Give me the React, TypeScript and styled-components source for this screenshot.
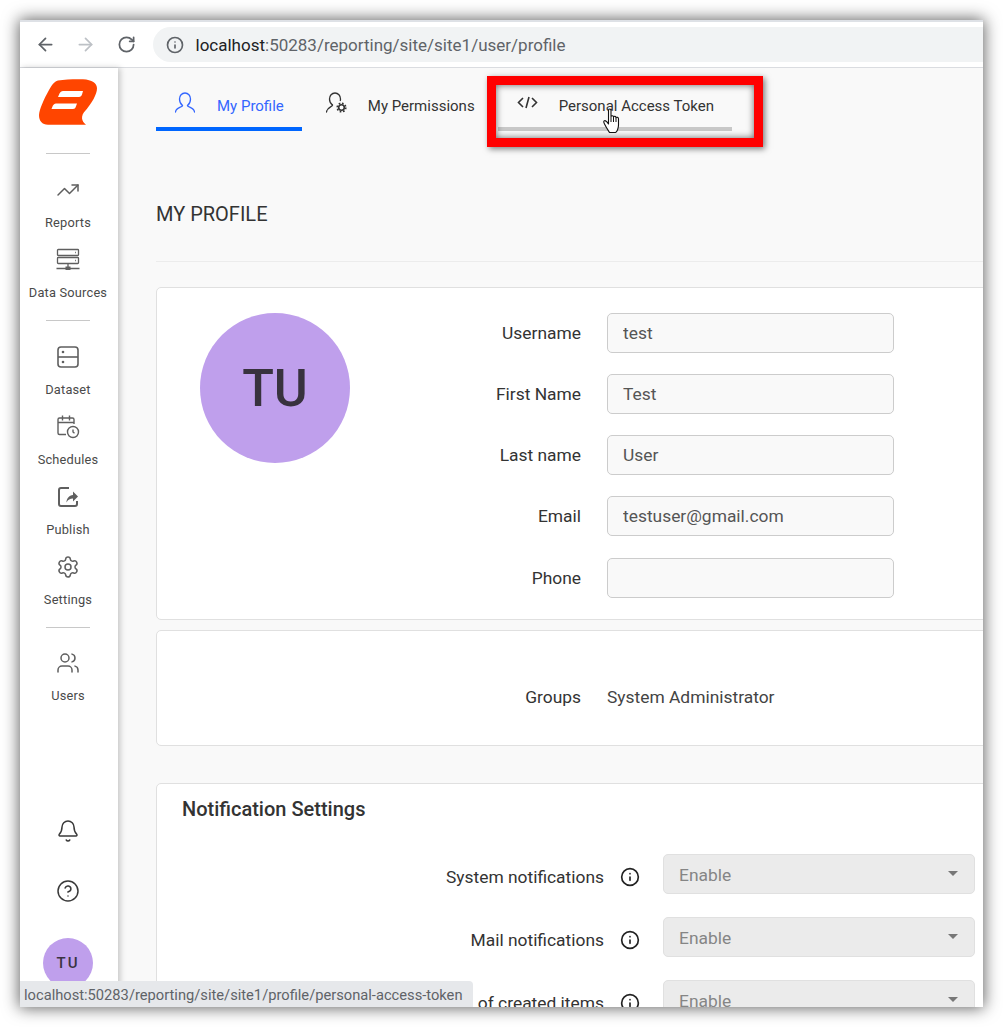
import React from 'react';
import styled, { createGlobalStyle } from 'styled-components';
import { ArrowLeft, ArrowRight, Bell, CircleHelp, Info, RotateCw, Settings, TrendingUp, Users } from 'lucide-react';

const GlobalStyle = createGlobalStyle`
  html, body {
    margin: 0;
    height: 100%;
    overflow: hidden;
    background: #ffffff;
  }
  * {
    box-sizing: border-box;
  }
`;

const Frame = styled.div`
  position: relative;
  display: flex;
  flex-direction: column;
  width: 963px;
  height: 987px;
  margin: 20px;
  overflow: hidden;
  background: #ffffff;
  border-top: 2px solid #dee1e6;
  font-family: Roboto, 'Liberation Sans', sans-serif;
`;

const Shadow = styled.div`
  position: fixed;
  left: 20px;
  top: 20px;
  width: 963px;
  height: 987px;
  box-shadow: 0 0 15px 1px rgba(0, 0, 0, 0.62);
`;

const BrowserBar = styled.div`
  flex: none;
  display: flex;
  align-items: center;
  height: 46px;
  padding: 0 0 1px 14px;
  background: #ffffff;
  border-bottom: 1px solid #dadce0;
`;

const NavButton = styled.div<{ $off?: boolean }>`
  display: flex;
  justify-content: center;
  width: 22px;
  margin-right: 18.5px;
  color: ${(p) => (p.$off ? '#bdc1c6' : '#5f6368')};
`;

const UrlPill = styled.div`
  flex: 1;
  display: flex;
  align-items: center;
  gap: 12px;
  height: 35px;
  margin-left: -3px;
  padding: 2px 0 0 13px;
  border-radius: 18px 0 0 18px;
  background: #f1f3f4;
  color: #5f6368;
  font-size: 17px;
`;

const UrlHost = styled.span`
  color: #202124;
`;

const Body = styled.div`
  flex: 1;
  display: flex;
  min-height: 0;
`;

const Sidebar = styled.nav`
  position: relative;
  z-index: 1;
  flex: none;
  display: flex;
  flex-direction: column;
  align-items: center;
  width: 98px;
  padding: 11px 2px 19px 0;
  background: #ffffff;
  box-shadow: 2px 0 6px rgba(0, 0, 0, 0.22);
`;

const SideRule = styled.div<{ $after: number; $before: number }>`
  flex: none;
  width: 44px;
  height: 1px;
  margin: ${(p) => p.$before}px 0 ${(p) => p.$after}px;
  background: #c8c8c8;
`;

const SideGroup = styled.div`
  display: flex;
  flex-direction: column;
  align-items: center;
  gap: 17px;
`;

const SideItem = styled.div`
  display: flex;
  flex-direction: column;
  align-items: center;
  gap: 13px;
  color: #5f5f5f;
`;

const SideIcon = styled.div`
  display: flex;
  align-items: center;
  justify-content: center;
  width: 24px;
  height: 24px;
`;

const SideLabel = styled.span`
  font-size: 12.8px;
  line-height: 16px;
  letter-spacing: 0.2px;
  white-space: nowrap;
  color: #4a4a4a;
`;

const SideBottom = styled.div`
  margin-top: auto;
  display: flex;
  flex-direction: column;
  align-items: center;
  gap: 36px;
  color: #3a3a3a;
`;

const SmallAvatar = styled.div`
  display: flex;
  align-items: center;
  justify-content: center;
  width: 50px;
  height: 50px;
  margin-top: -1px;
  border-radius: 50%;
  background: #bf9fec;
  color: #3a3340;
  font-size: 15px;
  font-weight: 500;
  letter-spacing: 2px;
`;

const Main = styled.main`
  flex: 1;
  min-width: 0;
  overflow: hidden;
  padding-left: 38px;
  background: #f9f9f9;
  color: #333333;
`;

const Tabs = styled.div`
  display: flex;
  gap: 5px;
  height: 63px;
`;

const Tab = styled.div<{ $color: string; $line: string }>`
  display: flex;
  gap: 21px;
  height: 63px;
  padding: 24px 18px 0 19px;
  border-bottom: 4px solid ${(p) => p.$line};
  color: ${(p) => p.$color};
  font-size: 15px;
  line-height: 28px;
  white-space: nowrap;
`;

const TabIcon = styled.div`
  flex: none;
  width: 21px;
  height: 22px;
`;

const Heading = styled.h1`
  margin: 71px 0 35px;
  font-size: 20px;
  font-weight: 400;
  line-height: 24px;
  color: #333333;
`;

const Rule = styled.div`
  height: 1px;
  margin: 0 -20px 25px 0;
  background: #ececec;
`;

const Card = styled.section<{ $gap: number }>`
  margin: 0 -20px ${(p) => p.$gap}px 0;
  background: #ffffff;
  border: 1px solid #e0e0e0;
  border-radius: 5px;
`;

const ProfileRow = styled.div`
  display: flex;
  padding: 25px 0 21.4px 43px;
`;

const Avatar = styled.div`
  flex: none;
  display: flex;
  align-items: center;
  justify-content: center;
  width: 150px;
  height: 150px;
  border-radius: 50%;
  background: #bf9fec;
  color: #38323e;
  font-size: 52px;
  font-weight: 500;
`;

const Fields = styled.div`
  display: grid;
  grid-template-columns: 231px 287px;
  column-gap: 26px;
  row-gap: 21.15px;
`;

const FieldLabel = styled.label<{ $drop?: number }>`
  align-self: center;
  padding-top: ${(p) => p.$drop ?? 0}px;
  text-align: right;
  font-size: 17.4px;
  color: #333333;
`;

const FieldInput = styled.input`
  width: 287px;
  height: 40px;
  padding: 0 15px;
  border: 1px solid #cccccc;
  border-radius: 5px;
  outline: none;
  background: #f9f9f9;
  color: #555555;
  font-family: inherit;
  font-size: 17.4px;
`;

const GroupsRow = styled.div`
  display: grid;
  grid-template-columns: 424px 1fr;
  column-gap: 26px;
  align-items: center;
  height: 40px;
  margin: 46px 0 28px;
`;

const GroupsValue = styled.span`
  font-size: 17.4px;
  color: #444444;
`;

const CardTitle = styled.h2`
  margin: 13px 0 33px 25px;
  font-size: 20px;
  font-weight: 500;
  line-height: 24px;
  color: #333333;
`;

const Options = styled.div`
  display: grid;
  grid-template-columns: 447px 20px 312px;
  column-gap: 16px;
  grid-auto-rows: 40px;
  row-gap: 23px;
  align-items: center;
`;

const InfoMark = styled.div`
  display: flex;
  padding-top: 6px;
  color: #222222;
`;

const DisabledSelect = styled.div`
  position: relative;
  left: 7px;
  display: flex;
  align-items: center;
  justify-content: space-between;
  width: 312px;
  height: 40px;
  padding: 2px 16px 0 15px;
  border: 1px solid #e0e0e0;
  border-radius: 5px;
  background: #ebebeb;
  color: #858585;
  font-size: 17.4px;
`;

const Caret = styled.span`
  width: 0;
  height: 0;
  margin-top: -2px;
  border-left: 5px solid transparent;
  border-right: 5px solid transparent;
  border-top: 5px solid #777777;
`;

const Highlight = styled.div`
  position: absolute;
  left: 467px;
  top: 54px;
  width: 276px;
  height: 71px;
  border: 9px solid #ff0000;
  box-shadow: 2px 2px 6px rgba(0, 0, 0, 0.5), inset 0 0 7px rgba(0, 0, 0, 0.6);
  z-index: 3;
`;

const Cursor = styled.svg`
  position: absolute;
  left: 583px;
  top: 86px;
  z-index: 4;
`;

const StatusBubble = styled.div`
  position: absolute;
  left: 0;
  bottom: 0;
  z-index: 5;
  width: 453px;
  height: 26px;
  padding: 0 0 0 4px;
  border-top-right-radius: 4px;
  background: #e6e8eb;
  color: #5f6368;
  font-size: 14.7px;
  line-height: 28px;
  white-space: nowrap;
`;

const Logo = () => (
  <svg width="58" height="46" viewBox="0 0 58 46">
    <path
      fill="#ff4500"
      fillRule="evenodd"
      d="M19 1.500C26 .5 36 0 44 .3c9 .5 14 4 14 9 0 6-5 15-13 24-2 2.500-2.500 6-1.500 8 .8 2 2 3.400 3.500 4.400H9C3 45.700 0 42 0 36 .5 30 5 20 10 11c3-5 5-8.500 9-9.500ZM24 12c-1.500 0-2.700 1-3.500 2.500L19 18h21c1.500 0 2.500-1 3-2.500l1-3.500ZM17 24.500c-1.500 0-2.500 1-3.200 2.300L12.500 30H34c1.500 0 2.300-1 2.800-2.300l1.200-3.200Z"
    />
  </svg>
);

const ServerIcon = () => (
  <svg width="24" height="24" viewBox="0 -1 24 24" fill="none" stroke="#5f5f5f" strokeWidth="1.300">
    <rect x="1.500" y="0.500" width="21" height="6" rx="0.800" />
    <rect x="1.500" y="8.500" width="21" height="6" rx="0.800" />
    <path d="M12 14.500v4M0.500 19.500h23" />
    <rect x="9.500" y="17.500" width="5" height="3.500" fill="#5f5f5f" stroke="none" />
    <path d="M19 3.500h.8M19 11.500h.8" />
  </svg>
);

const DatasetIcon = () => (
  <svg width="24" height="24" viewBox="0 0 24 24" fill="none" stroke="#5f5f5f" strokeWidth="1.600">
    <rect x="2" y="2" width="20" height="20" rx="3" />
    <path d="M2 12h20" />
    <circle cx="7" cy="7" r="1.300" fill="#5f5f5f" stroke="none" />
    <circle cx="7" cy="17" r="1.300" fill="#5f5f5f" stroke="none" />
  </svg>
);

const ScheduleIcon = () => (
  <svg width="24" height="24" viewBox="0 0 24 24" fill="none" stroke="#5f5f5f" strokeWidth="1.400">
    <path d="M10 19.500H3.500a1.500 1.500 0 0 1-1.500-1.500V4.500A1.500 1.500 0 0 1 3.500 3h13A1.500 1.500 0 0 1 18 4.500V9" />
    <path d="M2 7.500h16M6.500 0.500v5M13.500 0.500v5" />
    <circle cx="17" cy="17" r="5.500" />
    <path d="M17 14.500V17l1.500 1.200" />
  </svg>
);

const PublishIcon = () => (
  <svg width="24" height="24" viewBox="0 0 24 24" fill="none" stroke="#5f5f5f" strokeWidth="2">
    <path d="M13 3H5a2 2 0 0 0-2 2v14a2 2 0 0 0 2 2h14a2 2 0 0 0 2-2v-3" />
    <path fill="#5f5f5f" stroke="none" d="M17 6.500l5 5-5 5v-3c-3 0-5 1-6.500 4 0-4 2.500-7 6.500-7.500Z" />
  </svg>
);

const PersonIcon = ({ color }: { color: string }) => (
  <svg width="20" height="22" viewBox="0 0 20 22" fill="none" stroke={color} strokeWidth="1.300" strokeLinecap="round">
    <path d="M7.500 13.500C5.500 12 4.500 9.500 4.500 7c0-3.300 2.300-6 5.500-6s5.500 2.700 5.500 6c0 2.500-1 5-3 6.500" />
    <path d="M7.500 13.500c0 2-6.500 1.500-7 6.500M12.500 13.500c0 2 6.500 1.500 7 6.500" />
  </svg>
);

const PermissionIcon = () => (
  <svg width="21" height="22" viewBox="0 0 21 22" fill="none" stroke="#333333" strokeWidth="1.300" strokeLinecap="round">
    <path d="M6.500 13C4.500 11.500 3.500 9.500 3.500 7c0-3.300 2.300-6 5.500-6s5.500 2.700 5.500 6c0 .5 0 1-.2 1.500" />
    <path d="M6.500 13c0 2-5.500 2-6 7" />
    <circle cx="15.500" cy="15.500" r="2.800" strokeWidth="1.600" />
    <circle cx="15.500" cy="15.500" r="4.300" strokeWidth="1.600" strokeLinecap="butt" strokeDasharray="1.700 1.670" />
  </svg>
);

const CodeIcon = () => (
  <svg width="21" height="22" viewBox="0 0 21 22" fill="none" stroke="#333333" strokeWidth="1.600">
    <path d="M6 6l-4.500 4.500L6 15M15 6l4.500 4.500L15 15M12 5L9 16" />
  </svg>
);

const HandCursor = () => (
  <Cursor width="18" height="26" viewBox="0 0 18 26">
    <path
      fill="#ffffff"
      stroke="#111111"
      strokeWidth="1.100"
      strokeLinejoin="round"
      d="M5.500 2.500c0-2 2.500-2 2.500 0v6c.5-1 2.500-1 2.500.5.500-1 2.500-1 2.500.7.700-.7 2.500-.5 2.500 1v6.300c0 3-1.500 7-3 7.500H6.500C5 22 3.500 20 1.500 16c-1-2-1-3 0-3.300 1-.3 2 .3 4 3.300Z"
    />
    <path stroke="#111111" fill="none" d="M8 9v5M10.500 9v5M13 10v4" />
  </Cursor>
);

const profileFields = [
  ['Username', 'test'],
  ['First Name', 'Test'],
  ['Last name', 'User'],
  ['Email', 'testuser@gmail.com'],
  ['Phone', ''],
];

const notificationLabels = ['System notifications', 'Mail notifications', 'of created items'];

export default function App() {
  return (
    <>
      <GlobalStyle />
      <Shadow />
      <Frame>
        <BrowserBar>
          <NavButton><ArrowLeft size={21} /></NavButton>
          <NavButton $off><ArrowRight size={21} /></NavButton>
          <NavButton><RotateCw size={19} strokeWidth={2.200} /></NavButton>
          <UrlPill>
            <Info size={18} strokeWidth={2.200} />
            <span><UrlHost>localhost</UrlHost>:50283/reporting/site/site1/user/profile</span>
          </UrlPill>
        </BrowserBar>
        <Body>
          <Sidebar>
            <Logo />
            <SideRule $before={28} $after={24} />
            <SideGroup>
              <SideItem>
                <SideIcon><TrendingUp size={24} strokeWidth={1.500} /></SideIcon>
                <SideLabel>Reports</SideLabel>
              </SideItem>
              <SideItem>
                <SideIcon><ServerIcon /></SideIcon>
                <SideLabel>Data Sources</SideLabel>
              </SideItem>
            </SideGroup>
            <SideRule $before={19} $after={24} />
            <SideGroup>
              <SideItem>
                <SideIcon><DatasetIcon /></SideIcon>
                <SideLabel>Dataset</SideLabel>
              </SideItem>
              <SideItem>
                <SideIcon><ScheduleIcon /></SideIcon>
                <SideLabel>Schedules</SideLabel>
              </SideItem>
              <SideItem>
                <SideIcon><PublishIcon /></SideIcon>
                <SideLabel>Publish</SideLabel>
              </SideItem>
              <SideItem>
                <SideIcon><Settings size={24} strokeWidth={1.500} /></SideIcon>
                <SideLabel>Settings</SideLabel>
              </SideItem>
            </SideGroup>
            <SideRule $before={19} $after={23} />
            <SideItem>
              <SideIcon><Users size={24} strokeWidth={1.500} /></SideIcon>
              <SideLabel>Users</SideLabel>
            </SideItem>
            <SideBottom>
              <Bell size={24} strokeWidth={1.500} />
              <CircleHelp size={24} strokeWidth={1.500} />
              <SmallAvatar>TU</SmallAvatar>
            </SideBottom>
          </Sidebar>
          <Main>
            <Tabs>
              <Tab $color="#3366ff" $line="#0066ff">
                <TabIcon><PersonIcon color="#3366ff" /></TabIcon>
                My Profile
              </Tab>
              <Tab $color="#333333" $line="transparent">
                <TabIcon><PermissionIcon /></TabIcon>
                My Permissions
              </Tab>
              <Tab $color="#333333" $line="#c8c8c8">
                <TabIcon><CodeIcon /></TabIcon>
                Personal Access Token
              </Tab>
            </Tabs>
            <Heading>MY PROFILE</Heading>
            <Rule />
            <Card $gap={10}>
              <ProfileRow>
                <Avatar>TU</Avatar>
                <Fields>
                  {profileFields.map(([label, value]) => (
                    <React.Fragment key={label}>
                      <FieldLabel>{label}</FieldLabel>
                      <FieldInput readOnly value={value} />
                    </React.Fragment>
                  ))}
                </Fields>
              </ProfileRow>
            </Card>
            <Card $gap={37}>
              <GroupsRow>
                <FieldLabel>Groups</FieldLabel>
                <GroupsValue>System Administrator</GroupsValue>
              </GroupsRow>
            </Card>
            <Card $gap={0}>
              <CardTitle>Notification Settings</CardTitle>
              <Options>
                {notificationLabels.map((label) => (
                  <React.Fragment key={label}>
                    <FieldLabel $drop={6}>{label}</FieldLabel>
                    <InfoMark><Info size={20} strokeWidth={2} /></InfoMark>
                    <DisabledSelect>Enable<Caret /></DisabledSelect>
                  </React.Fragment>
                ))}
              </Options>
            </Card>
          </Main>
        </Body>
        <Highlight />
        <HandCursor />
        <StatusBubble>localhost:50283/reporting/site/site1/profile/personal-access-token</StatusBubble>
      </Frame>
    </>
  );
}
